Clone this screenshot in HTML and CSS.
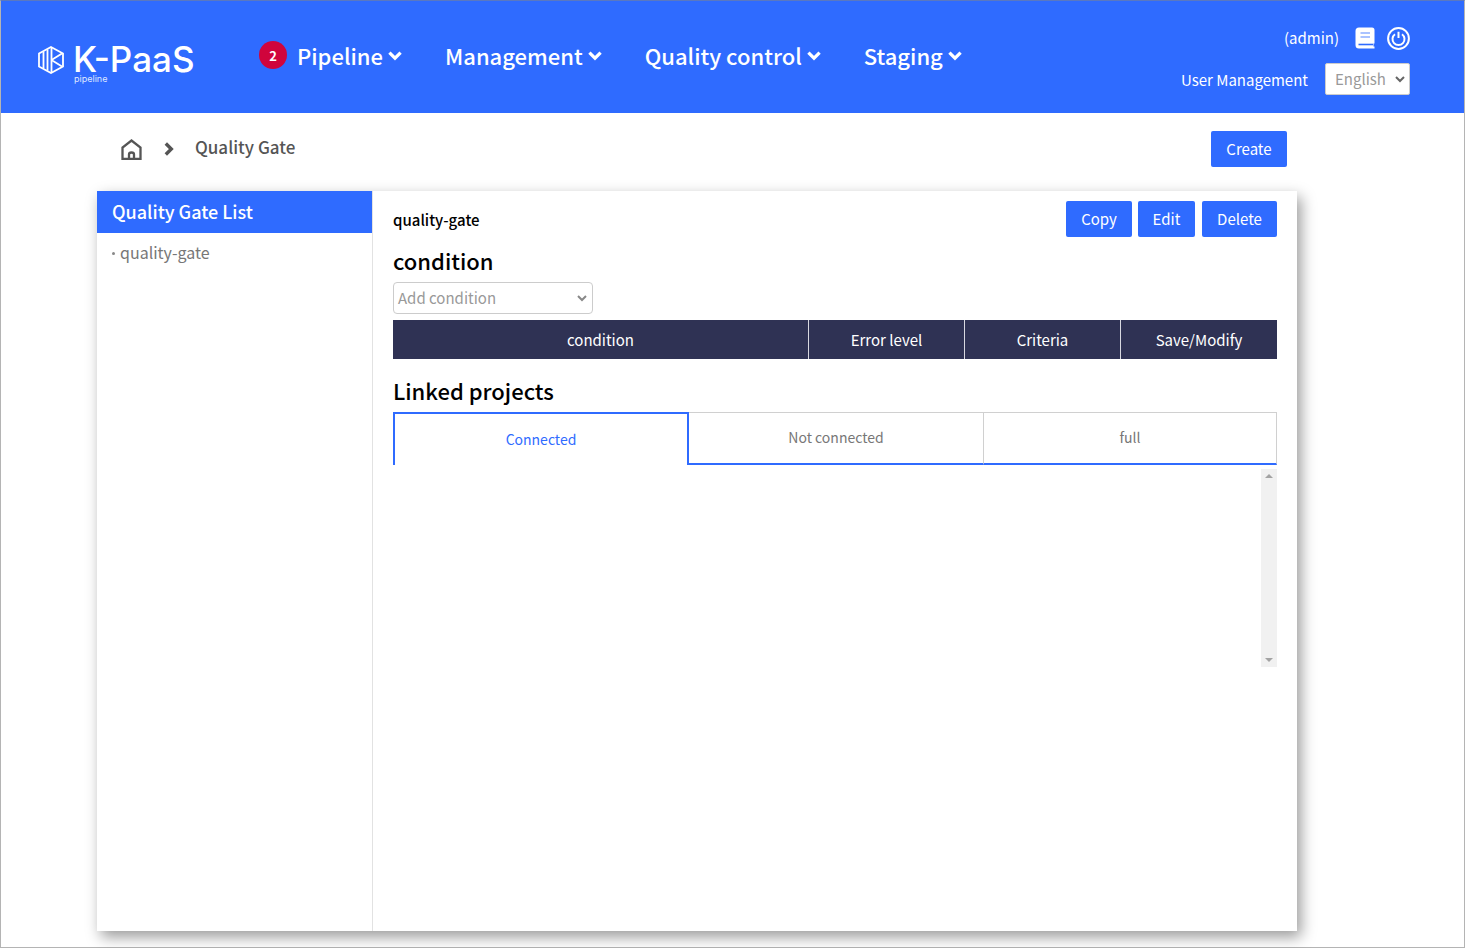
FILE: index.html
```html
<!DOCTYPE html>
<html>
<head>
  <title>Quality Gate</title>
  <link rel="stylesheet" href="styles.css">
</head>
<body>
  <div class="page">
    <header class="top-bar">
      <div class="logo">
        <svg class="logo-mark" width="26" height="28" viewBox="0 0 26 28" fill="none" stroke="#fff" stroke-width="1.8">
          <path d="M13 1 L25 7.5 V20.5 L13 27 L1 20.5 V7.5 Z"/>
          <path d="M5.5 5.5 V22.5 M9.5 3.5 V24.5 M13.5 1.5 V26.5"/>
          <path d="M13.5 14 L24 7.5 M13.5 14 L24 20.5"/>
        </svg>
        <div class="logo-text">
          <span class="logo-name">K-PaaS</span>
          <span class="logo-sub">pipeline</span>
        </div>
      </div>
      <nav class="main-nav">
        <span class="badge">2</span>
        <a class="nav-item nav-first">Pipeline<svg class="chev" width="14" height="10" viewBox="0 0 14 10"><path d="M1.4 1.6 L7 7.2 L12.6 1.6" fill="none" stroke="#fff" stroke-width="3.2"/></svg></a>
        <a class="nav-item">Management<svg class="chev" width="14" height="10" viewBox="0 0 14 10"><path d="M1.4 1.6 L7 7.2 L12.6 1.6" fill="none" stroke="#fff" stroke-width="3.2"/></svg></a>
        <a class="nav-item">Quality control<svg class="chev" width="14" height="10" viewBox="0 0 14 10"><path d="M1.4 1.6 L7 7.2 L12.6 1.6" fill="none" stroke="#fff" stroke-width="3.2"/></svg></a>
        <a class="nav-item">Staging<svg class="chev" width="14" height="10" viewBox="0 0 14 10"><path d="M1.4 1.6 L7 7.2 L12.6 1.6" fill="none" stroke="#fff" stroke-width="3.2"/></svg></a>
      </nav>
      <div class="user-box">
        <div class="user-row">
          <span class="user-name">(admin)</span>
          <svg class="book" width="20" height="22" viewBox="0 0 20 22">
            <path d="M4 0.5 H17 Q19.5 0.5 19.5 3 V16.5 H18.5 V19.5 H19.5 V21.5 H4 Q0.5 21.5 0.5 18 V4 Q0.5 0.5 4 0.5 Z" fill="#fff"/>
            <path d="M5.5 6 H15 M5.5 10 H15" stroke="#8fb0ff" stroke-width="1.6"/>
            <path d="M3.5 17.5 H18" stroke="#2f6bff" stroke-width="1.6"/>
          </svg>
          <svg class="power" width="23" height="23" viewBox="0 0 23 23" fill="none" stroke="#fff" stroke-width="2">
            <circle cx="11.5" cy="11.5" r="10.4"/>
            <path d="M8 7.2 A6 6 0 1 0 15 7.2 M11.5 4.8 V11"/>
          </svg>
        </div>
        <div class="user-row user-row-low">
          <a class="user-link">User Management</a>
          <div class="lang">English<svg width="10" height="7" viewBox="0 0 10 7"><path d="M1 1 L5 5 L9 1" fill="none" stroke="#666" stroke-width="2"/></svg></div>
        </div>
      </div>
    </header>

    <div class="crumb-bar">
      <svg class="home" width="21" height="21" viewBox="0 0 21 21" fill="none" stroke="#555" stroke-width="2.3">
        <path d="M1.5 20 V8.5 L10.5 1.5 L19.5 8.5 V20 Z"/>
        <path d="M8 20 V15.5 Q8 13.5 10.5 13.5 Q13 13.5 13 15.5 V20"/>
      </svg>
      <svg class="crumb-sep" width="10" height="14" viewBox="0 0 10 14"><path d="M1.8 1.5 L7.3 7 L1.8 12.5" fill="none" stroke="#555" stroke-width="3.4"/></svg>
      <span class="crumb-text">Quality Gate</span>
      <button class="btn btn-create">Create</button>
    </div>

    <main class="card">
      <aside class="side">
        <h2 class="side-title">Quality Gate List</h2>
        <ul class="side-list">
          <li>quality-gate</li>
        </ul>
      </aside>
      <section class="detail">
        <div class="detail-head">
          <span class="gate-name">quality-gate</span>
          <div class="btn-group">
            <button class="btn btn-copy">Copy</button>
            <button class="btn btn-edit">Edit</button>
            <button class="btn btn-del">Delete</button>
          </div>
        </div>
        <h3 class="sec-title">condition</h3>
        <div class="cond-select">Add condition<svg width="10" height="7" viewBox="0 0 10 7"><path d="M1 1 L5 5 L9 1" fill="none" stroke="#888" stroke-width="2"/></svg></div>
        <table class="cond-table">
          <tr>
            <th class="col-main">condition</th>
            <th>Error level</th>
            <th>Criteria</th>
            <th class="col-last">Save/Modify</th>
          </tr>
        </table>
        <h3 class="sec-title sec-linked">Linked projects</h3>
        <div class="tabs">
          <div class="tab tab-on">Connected</div>
          <div class="tab tab-mid">Not connected</div>
          <div class="tab">full</div>
        </div>
        <div class="project-box">
          <div class="scroll-bar">
            <span class="arrow-up"></span>
            <span class="arrow-down"></span>
          </div>
        </div>
      </section>
    </main>
  </div>
</body>
</html>
```

FILE: styles.css
```css
* {
  box-sizing: border-box;
}

html, body {
  margin: 0;
  height: 100%;
  overflow: hidden;
}

body {
  font-family: "Noto Sans CJK KR", "Noto Sans", sans-serif;
  color: #000;
  background: #fff;
}

.page {
  height: 948px;
  border: 1px solid #b4b4b4;
  border-top-color: #5a78c0;
}

/* header */
.top-bar {
  height: 112px;
  background: #2f6bff;
  color: #fff;
  display: flex;
  align-items: flex-start;
  padding-right: 54px;
}

.logo {
  display: flex;
  align-items: flex-start;
  margin: 45px 0 0 37px;
  width: 221px;
}

.logo-mark {
  margin-right: 9px;
}

.logo-text {
  display: flex;
  flex-direction: column;
}

.logo-name {
  font-family: Inter, sans-serif;
  font-size: 35px;
  font-weight: 500;
  line-height: 28px;
  margin-top: -1px;
}

.logo-sub {
  font-family: Inter, sans-serif;
  font-size: 9px;
  line-height: 10px;
  margin: 1px 0 0 1px;
  color: #dfe8ff;
}

.main-nav {
  display: flex;
  align-items: center;
  margin-top: 38px;
  height: 32px;
}

.badge {
  width: 28px;
  height: 28px;
  border-radius: 50%;
  background: #d0043c;
  font-size: 13px;
  font-weight: 700;
  display: flex;
  align-items: center;
  justify-content: center;
  margin-right: 10px;
}

.nav-item {
  font-size: 22px;
  font-weight: 500;
  line-height: 32px;
  display: flex;
  align-items: center;
  margin-right: 43px;
  white-space: nowrap;
}

.chev {
  margin: 2px 0 0 5px;
}

.user-box {
  margin-left: auto;
  padding-top: 25px;
}

.user-row {
  display: flex;
  align-items: center;
  justify-content: flex-end;
  height: 24px;
}

.user-name {
  font-size: 15px;
  margin-top: -2px;
}

.book {
  margin: 0 12px 0 16px;
}

.user-row-low {
  height: 32px;
  margin-top: 13px;
}

.user-link {
  font-size: 15px;
  font-weight: 400;
  margin-right: 17px;
  margin-top: 1px;
}

.lang {
  width: 85px;
  height: 32px;
  background: #fff;
  border: 1px solid #ccc;
  border-radius: 2px;
  color: #999;
  font-size: 15px;
  display: flex;
  align-items: center;
  justify-content: space-between;
  padding: 0 4px 2px 9px;
}

.lang svg {
  margin-top: 2px;
}

/* breadcrumb */
.crumb-bar {
  height: 78px;
  display: flex;
  align-items: center;
  padding: 0 177px 6px 120px;
}

.crumb-sep {
  margin: 0 21px 0 22px;
}

.crumb-text {
  font-size: 17px;
  font-weight: 500;
  color: #555;
  margin-top: -5px;
}

.btn {
  font-family: inherit;
  font-size: 15px;
  height: 36px;
  padding: 0 0 2px;
  border: 0;
  border-radius: 2px;
  background: #2f6bff;
  color: #fff;
}

.btn-create {
  width: 76px;
  margin-left: auto;
}

.btn-copy {
  width: 66px;
}

.btn-edit {
  width: 57px;
}

.btn-del {
  width: 75px;
  margin-left: 1px;
}

/* card */
.card {
  width: 1200px;
  height: 740px;
  margin-left: 96px;
  display: flex;
  background: #fff;
  box-shadow: 4px 6px 14px rgba(0, 0, 0, 0.4);
}

.side {
  width: 276px;
  border-right: 1px solid #e2e2e2;
}

.side-title {
  margin: 0;
  height: 42px;
  width: 275px;
  padding-left: 15px;
  background: #2f6bff;
  color: #fff;
  font-size: 18px;
  font-weight: 500;
  line-height: 40px;
}

.side-list {
  list-style: none;
  margin: 6px 0 0;
  padding: 0 0 0 15px;
  color: #777;
  font-size: 16px;
  line-height: 26px;
}

.side-list li::before {
  content: "";
  display: inline-block;
  width: 3px;
  height: 3px;
  background: #888;
  border-radius: 50%;
  margin: 0 5px 4px 0;
}

.detail {
  flex: 1;
  padding: 10px 20px 0;
}

.detail-head {
  display: flex;
  align-items: center;
  justify-content: space-between;
  height: 36px;
}

.gate-name {
  font-size: 15px;
  font-weight: 500;
}

.btn-group {
  display: flex;
  gap: 6px;
}

.sec-title {
  margin: 6px 0 0;
  font-size: 22px;
  font-weight: 500;
  line-height: 34px;
}

.cond-select {
  width: 200px;
  height: 32px;
  margin-top: 5px;
  border: 1px solid #ccc;
  border-radius: 4px;
  color: #999;
  font-size: 15px;
  display: flex;
  align-items: center;
  justify-content: space-between;
  padding: 0 5px 2px 4px;
}

.cond-select svg {
  margin-top: 2px;
}

.cond-table {
  width: 884px;
  height: 39px;
  margin-top: 6px;
  border-collapse: separate;
  border-spacing: 0;
  table-layout: fixed;
  background: #2f3254;
  color: #fff;
}

.cond-table th {
  width: 156px;
  padding: 0;
  font-size: 15px;
  font-weight: 400;
  border-left: 1px solid #d8d8e0;
}

.cond-table th.col-main {
  width: 415px;
  border-left: 0;
}

.cond-table th.col-last {
  width: 157px;
}

.sec-linked {
  margin-top: 14px;
}

.tabs {
  display: flex;
  height: 53px;
  margin-top: 5px;
}

.tab {
  flex: 1;
  display: flex;
  align-items: center;
  justify-content: center;
  font-size: 14px;
  color: #777;
  border-top: 1px solid #d0d0d0;
  border-right: 1px solid #d0d0d0;
  border-bottom: 2px solid #2f6bff;
  padding-bottom: 2px;
}

.tab-on {
  flex: 0 0 296px;
  color: #2f6bff;
  border: 2px solid #2f6bff;
  border-bottom: 0;
  padding: 0 0 2px;
}

.tab-mid {
  flex: 0 0 295px;
}

.project-box {
  height: 198px;
  margin-top: 4px;
  display: flex;
  justify-content: flex-end;
}

.scroll-bar {
  width: 16px;
  background: #f1f1f1;
  display: flex;
  flex-direction: column;
  align-items: center;
  justify-content: space-between;
  padding: 5px 0;
}

.arrow-up {
  border: 4px solid transparent;
  border-top: 0;
  border-bottom: 4px solid #a3a3a3;
}

.arrow-down {
  border: 4px solid transparent;
  border-bottom: 0;
  border-top: 4px solid #a3a3a3;
}
```
